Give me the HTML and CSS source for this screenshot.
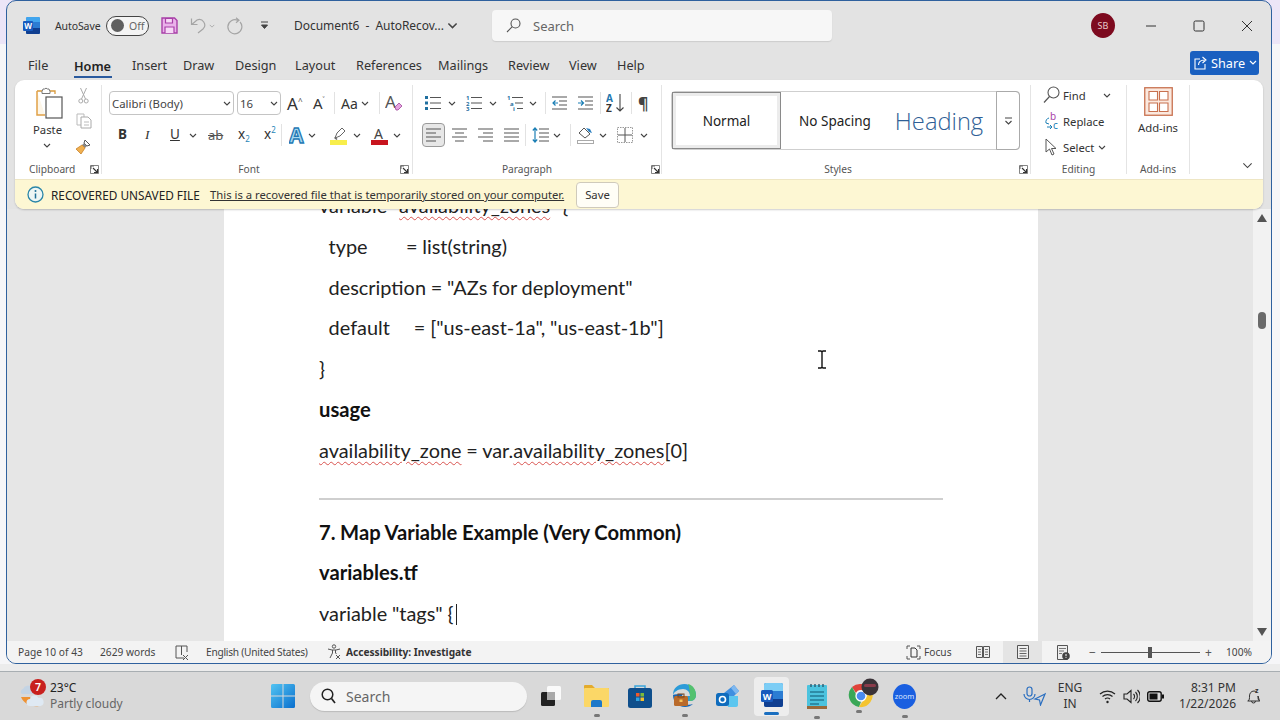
FILE: index.html
```html
<!DOCTYPE html>
<html lang="en">
<head>
<meta charset="utf-8">
<title>Document6 - Word</title>
<link rel="stylesheet" href="styles.css">
</head>
<body>
<svg class="sprite" aria-hidden="true">
  <symbol id="chev" viewBox="0 0 8 5"><path d="M1 1l3 3 3-3" fill="none" stroke="#444" stroke-width="1.1"/></symbol>
  <symbol id="launch" viewBox="0 0 9 9"><path d="M.5.5h8v8h-8z" fill="none" stroke="#666" stroke-width=".8"/><path d="M1 1h3M1 1v3" stroke="#666" fill="none"/><path d="M3 3l4.5 4.5M7.5 4v3.5H4" fill="none" stroke="#333" stroke-width="1.1"/></symbol>
</svg>
<div class="desktop">
  <main class="window">
    <header class="titlebar">
      <svg class="ic" width="17" height="17" viewBox="0 0 17 17"><rect x="3" width="14" height="17" rx="1.5" fill="#2b7cd3"/><path d="M3 1.5A1.5 1.5 0 014.5 0h11A1.5 1.5 0 0117 1.5V5H3z" fill="#41a5ee"/><path d="M3 11h14v4.5a1.500 1.500 0 01-1.500 1.500h-11A1.500 1.500 0 013 15.500z" fill="#103f91"/><rect y="4" width="10" height="10" rx="1" fill="#185abd"/><text x="5" y="12" class="svgw">W</text></svg>
      <span class="autosave">AutoSave</span>
      <span class="toggle"><i class="knob"></i><span>Off</span></span>
      <svg class="ic" width="17" height="17" viewBox="0 0 17 17"><path d="M1 1h12.500L16 3.500V16H1z" fill="#eab2ea" stroke="#a83fa8" stroke-width="1.400"/><path d="M4.500 1.500h7v4.500h-7zM4 16v-6h9v6" fill="#f6d8f6" stroke="#a83fa8" stroke-width="1.200"/></svg>
      <svg class="ic" width="16" height="17" viewBox="0 0 16 17"><path d="M1.500 1.500v6h6M1.800 7.500L7 3a5.500 5.500 0 016 9l-5 4" fill="none" stroke="#a5a5a5" stroke-width="1.200"/></svg>
      <svg class="ic" width="6" height="4"><use href="#chev" class="dim"/></svg>
      <svg class="ic" width="16" height="18" viewBox="0 0 16 18"><path d="M11 3.500A7 7 0 1013 5M9 .8l3 2.500-3 2.500" fill="none" stroke="#a5a5a5" stroke-width="1.200"/></svg>
      <svg class="ic" width="9" height="9" viewBox="0 0 9 9"><path d="M1 1h7M1.500 4l3 3.500 3-3.500z" fill="#444" stroke="#444"/></svg>
      <span class="doc-name">Document6&nbsp; -&nbsp; AutoRecov...</span>
      <svg class="ic" width="11" height="7"><use href="#chev"/></svg>
      <div class="search"><svg width="15" height="15" viewBox="0 0 15 15"><circle cx="9.500" cy="5.500" r="4.500" fill="none" stroke="#555" stroke-width="1.100"/><path d="M6.300 8.700L1 14" stroke="#555" stroke-width="1.100"/></svg><span>Search</span></div>
      <span class="avatar">SB</span>
      <svg class="ic" width="12" height="12" viewBox="0 0 12 12"><path d="M1 6h10" stroke="#333" stroke-width="1"/></svg>
      <svg class="ic" width="12" height="12" viewBox="0 0 12 12"><rect x="1" y="1" width="10" height="10" rx="1.500" fill="none" stroke="#333" stroke-width="1"/></svg>
      <svg class="ic" width="12" height="12" viewBox="0 0 12 12"><path d="M1 1l10 10M11 1L1 11" stroke="#333" stroke-width="1"/></svg>
    </header>

    <nav class="tabs">
      <span>File</span><span class="active">Home</span><span>Insert</span><span>Draw</span><span>Design</span><span>Layout</span><span>References</span><span>Mailings</span><span>Review</span><span>View</span><span>Help</span>
      <button class="share"><svg width="13" height="14" viewBox="0 0 13 14"><path d="M6 3H1v10h10V8M4.500 9c0-3 2-5 6-5M8.500 1l3.500 3-3.500 3" fill="none" stroke="#fff" stroke-width="1.100"/></svg><span>Share</span><svg width="8" height="5" viewBox="0 0 8 5"><path d="M1 1l3 3 3-3" fill="none" stroke="#fff" stroke-width="1.200"/></svg></button>
    </nav>

    <section class="card">
      <div class="ribbon">
        <div class="group g-clip">
          <div class="gbody clip-body">
            <div class="paste">
              <svg width="29" height="33" viewBox="0 0 29 33"><path d="M3 5h5M16 5h5v3" fill="none" stroke="#d99a3c" stroke-width="1.300"/><path d="M3 5v24h8" fill="#fdf6e8" stroke="#e0a046" stroke-width="1.500"/><path d="M8 5.500l1-2.500h1.500a2 2 0 013 0H15l1 2.500v2H8z" fill="#fff" stroke="#777"/><rect x="12" y="11" width="16" height="21" fill="#fff" stroke="#555" stroke-width="1.200"/></svg>
              <span class="t12">Paste</span>
              <svg class="ic" width="8" height="5"><use href="#chev"/></svg>
            </div>
            <div class="clip-tools">
              <svg width="11" height="17" viewBox="0 0 11 17"><path d="M2.500 1l5 11M8.500 1l-5 11" stroke="#aaa" fill="none"/><circle cx="2.800" cy="14" r="2" fill="none" stroke="#aaa"/><circle cx="8.200" cy="14" r="2" fill="none" stroke="#aaa"/></svg>
              <svg width="16" height="16" viewBox="0 0 16 16"><path d="M1 1h7v11H1z" fill="none" stroke="#bbb"/><path d="M5 4h7l3 3v8H5z" fill="#fff" stroke="#aaa"/><path d="M8 9h5M8 12h5" stroke="#bbb"/></svg>
              <svg width="17" height="17" viewBox="0 0 17 17"><path d="M10 2l5 5-3 1-3-3z" fill="#fff" stroke="#555"/><path d="M9 5l3 3-2 2-3-3z" fill="#888"/><path d="M7 7l3 3-4 6-5-5z" fill="#f0b050" stroke="#c8822a" stroke-width=".8"/></svg>
            </div>
          </div>
          <div class="glabel"><span>Clipboard</span><svg class="launch" width="9" height="9"><use href="#launch"/></svg></div>
        </div>

        <div class="group g-font">
          <div class="gbody stack">
            <div class="row r-font1">
              <div class="combo c-font"><span>Calibri (Body)</span><svg width="8" height="5"><use href="#chev"/></svg></div>
              <div class="combo c-size"><span>16</span><svg width="8" height="5"><use href="#chev"/></svg></div>
              <span class="gl big">A<sup>^</sup></span>
              <span class="gl med">A<sup>˅</sup></span>
              <i class="vdiv"></i>
              <span class="gl aa">Aa</span>
              <svg width="8" height="5"><use href="#chev"/></svg>
              <i class="vdiv"></i>
              <svg width="18" height="20" viewBox="0 0 18 20"><text x="0" y="15" class="svga">A</text><path d="M10 14l4-4 3 3-4 4h-2z" fill="#e6a3e0" stroke="#a0459a" stroke-width=".8"/></svg>
            </div>
            <div class="row r-font2">
              <b class="gl fmt">B</b>
              <i class="gl fmt ital">I</i>
              <u class="gl fmt">U</u>
              <svg width="8" height="5"><use href="#chev"/></svg>
              <s class="gl ab">ab</s>
              <span class="gl fmt sc">x<sub>2</sub></span>
              <span class="gl fmt sc">x<sup>2</sup></span>
              <i class="vdiv"></i>
              <svg width="16" height="19" viewBox="0 0 16 19"><text x="0" y="17" class="svgfx">A</text></svg>
              <svg width="8" height="5"><use href="#chev"/></svg>
              <svg width="17" height="19" viewBox="0 0 17 19"><path d="M5 12l2-5 5-5 3 3-5 5z" fill="#fff" stroke="#666"/><path d="M4 12l1.500-1 2 2-1 1z" fill="#666"/><rect y="14" width="17" height="5" fill="#f8ee4b"/></svg>
              <svg width="8" height="5"><use href="#chev"/></svg>
              <svg width="17" height="19" viewBox="0 0 17 19"><text x="3" y="12.500" class="svgc">A</text><rect y="14" width="17" height="5" fill="#c8141e"/></svg>
              <svg width="8" height="5"><use href="#chev"/></svg>
            </div>
          </div>
          <div class="glabel center"><span>Font</span><svg class="launch" width="9" height="9"><use href="#launch"/></svg></div>
        </div>

        <div class="group g-para">
          <div class="gbody stack">
            <div class="row r-para1">
              <svg width="16" height="16" viewBox="0 0 16 16"><path d="M0 1h3v3H0zM0 6.500h3v3H0zM0 12h3v3H0z" fill="#1f6f9f"/><path d="M5 2.500h11M5 8h11M5 13.500h11" stroke="#555" stroke-width="1.200"/></svg>
              <svg width="8" height="5"><use href="#chev"/></svg>
              <svg width="16" height="16" viewBox="0 0 16 16"><text x="0" y="5" class="svgn">1</text><text x="0" y="10.500" class="svgn">2</text><text x="0" y="16" class="svgn">3</text><path d="M5 2.500h11M5 8h11M5 13.500h11" stroke="#555" stroke-width="1.200"/></svg>
              <svg width="8" height="5"><use href="#chev"/></svg>
              <svg width="16" height="16" viewBox="0 0 16 16"><text x="0" y="5" class="svgn">1</text><text x="3" y="10.500" class="svgn">a</text><text x="6" y="16" class="svgn">i</text><path d="M5 2.500h11M8 8h8M10 13.500h6" stroke="#555" stroke-width="1.200"/></svg>
              <svg width="8" height="5"><use href="#chev"/></svg>
              <i class="vdiv"></i>
              <svg width="15" height="14" viewBox="0 0 15 14"><path d="M0 1h15M7 5h8M7 9h8M0 13h15" stroke="#555" stroke-width="1.100"/><path d="M1 7h5M3.500 4.500L1 7l2.500 2.500" fill="none" stroke="#1b7fb5" stroke-width="1.200"/></svg>
              <svg width="15" height="14" viewBox="0 0 15 14"><path d="M0 1h15M7 5h8M7 9h8M0 13h15" stroke="#555" stroke-width="1.100"/><path d="M0 7h5M3 4.500L5.500 7 3 9.500" fill="none" stroke="#1b7fb5" stroke-width="1.200"/></svg>
              <i class="vdiv"></i>
              <svg width="18" height="20" viewBox="0 0 18 20"><text x="0" y="9" class="svgaz blue">A</text><text x="0" y="19" class="svgaz">Z</text><path d="M14 1v17M10.500 14.500L14 18l3.500-3.500" fill="none" stroke="#444" stroke-width="1.100"/></svg>
              <i class="vdiv"></i>
              <span class="pilcrow">¶</span>
            </div>
            <div class="row r-para2">
              <span class="al-on"><svg width="15" height="14" viewBox="0 0 15 14"><path d="M0 1h15M0 5h10M0 9h15M0 13h10" stroke="#555" stroke-width="1.200"/></svg></span>
              <svg width="15" height="14" viewBox="0 0 15 14"><path d="M0 1h15M3 5h9M0 9h15M3 13h9" stroke="#555" stroke-width="1.200"/></svg>
              <svg width="15" height="14" viewBox="0 0 15 14"><path d="M0 1h15M5 5h10M0 9h15M5 13h10" stroke="#555" stroke-width="1.200"/></svg>
              <svg width="15" height="14" viewBox="0 0 15 14"><path d="M0 1h15M0 5h15M0 9h15M0 13h15" stroke="#555" stroke-width="1.200"/></svg>
              <i class="vdiv"></i>
              <svg width="17" height="16" viewBox="0 0 17 16"><path d="M7 2h10M7 6h10M7 10h10M7 14h10" stroke="#555" stroke-width="1.200"/><path d="M3 1v14M.8 3.500L3 1l2.200 2.500M.8 12.500L3 15l2.200-2.500" fill="none" stroke="#1b7fb5" stroke-width="1.200"/></svg>
              <svg width="8" height="5"><use href="#chev"/></svg>
              <i class="vdiv"></i>
              <svg width="17" height="18" viewBox="0 0 17 18"><path d="M2 7l5-5 6 6-5 4z" fill="#fff" stroke="#555"/><path d="M9 2l3 4 3 1-2-4z" fill="#2a7fc0"/><rect x=".5" y="14.500" width="16" height="3" fill="#fff" stroke="#aaa"/></svg>
              <svg width="8" height="5"><use href="#chev"/></svg>
              <svg width="16" height="16" viewBox="0 0 16 16"><path d="M8 1v14M1 8h14" stroke="#555"/><path d="M.5.500h15v15H.500z" fill="none" stroke="#999" stroke-dasharray="1.500 1"/></svg>
              <svg width="8" height="5"><use href="#chev"/></svg>
            </div>
          </div>
          <div class="glabel center"><span>Paragraph</span><svg class="launch" width="9" height="9"><use href="#launch"/></svg></div>
        </div>

        <div class="group g-styles">
          <div class="gbody">
            <div class="gallery">
              <div class="st-normal"><span>Normal</span></div>
              <div class="st-nospace">No Spacing</div>
              <div class="st-heading">Heading</div>
              <div class="st-more"><svg width="9" height="8" viewBox="0 0 9 8"><path d="M1 1h7" stroke="#444"/><path d="M1.500 4l3 3 3-3" fill="none" stroke="#444" stroke-width="1.100"/></svg></div>
            </div>
          </div>
          <div class="glabel center"><span>Styles</span><svg class="launch" width="9" height="9"><use href="#launch"/></svg></div>
        </div>

        <div class="group g-edit">
          <div class="gbody edit-list">
            <div class="edit-row"><svg width="17" height="18" viewBox="0 0 17 18"><circle cx="10.500" cy="6.500" r="5.500" fill="none" stroke="#555" stroke-width="1.100"/><path d="M6.500 10.500L1 16.500" stroke="#555" stroke-width="1.200"/></svg><span class="t12 w-find">Find</span><svg width="8" height="5"><use href="#chev"/></svg></div>
            <div class="edit-row"><svg width="17" height="18" viewBox="0 0 17 18"><text x="7" y="8" class="svgb">b</text><text x="10" y="17" class="svgcc">c</text><path d="M6 6a4 4 0 00-3 5l3 1M4 15h5M7 13l2 2-2 2" fill="none" stroke="#1b7fb5" stroke-width="1"/></svg><span class="t12">Replace</span></div>
            <div class="edit-row"><svg width="17" height="18" viewBox="0 0 17 18"><path d="M3 1v13l3.500-3 2.500 6 2-1-2.500-5.500H13z" fill="#fff" stroke="#555"/></svg><span class="t12 w-sel">Select</span><svg width="8" height="5"><use href="#chev"/></svg></div>
          </div>
          <div class="glabel center"><span>Editing</span></div>
        </div>

        <div class="group g-addin">
          <div class="gbody addin-body">
            <svg width="29" height="29" viewBox="0 0 29 29"><rect x=".75" y=".75" width="27.500" height="27.500" fill="#fbe9df" stroke="#c8714f" stroke-width="1.300"/><path d="M5 4.500h8.500V13H5zM15.500 4.500H24V13h-8.500zM5 16h8.500v8.500H5zM15.500 16H24v8.500h-8.500z" fill="#fff" stroke="#c8714f" stroke-width="1.100"/></svg>
            <span class="t12">Add-ins</span>
          </div>
          <div class="glabel center"><span>Add-ins</span></div>
        </div>

        <div class="collapse"><svg width="11" height="7" viewBox="0 0 8 5"><path d="M1 1l3 3 3-3" fill="none" stroke="#444" stroke-width=".8"/></svg></div>
      </div>

      <div class="notice">
        <svg width="17" height="17" viewBox="0 0 17 17"><circle cx="8.500" cy="8.500" r="7.500" fill="#eef6f4" stroke="#2a86a8" stroke-width="1.300"/><path d="M8.500 7.500v5" stroke="#1f6f96" stroke-width="1.500"/><circle cx="8.500" cy="5" r="1" fill="#1f6f96"/></svg>
        <span class="n-title">RECOVERED UNSAVED FILE</span>
        <a class="n-link">This is a recovered file that is temporarily stored on your computer.</a>
        <button class="n-save">Save</button>
      </div>
    </section>

    <section class="doc">
      <div class="scrollpane">
        <article class="page">
          <p>variable "<span class="sq">availability_zones</span>" {</p>
          <p>  type        = list(string)</p>
          <p>  description = "AZs for deployment"</p>
          <p>  default     = ["us-east-1a", "us-east-1b"]</p>
          <p>}</p>
          <p class="bold">usage</p>
          <p><span class="sq">availability_zone</span> = var.<span class="sq">availability_zones</span>[0]</p>
          <hr class="rule">
          <p class="bold">7. Map Variable Example (Very Common)</p>
          <p class="bold">variables.tf</p>
          <p>variable "tags" {<i class="caret"></i></p>
        </article>
      </div>
      <div class="vscroll">
        <svg width="10" height="8" viewBox="0 0 10 8"><path d="M5 0l5 8H0z" fill="#555"/></svg>
        <i class="thumb"></i>
        <svg width="10" height="8" viewBox="0 0 10 8"><path d="M5 8L0 0h10z" fill="#555"/></svg>
      </div>
      <svg class="ibeam" width="10" height="19" viewBox="0 0 10 19"><path d="M1 1h3l1 1 1-1h3M1 18h3l1-1 1 1h3M5 2v15" fill="none" stroke="#111" stroke-width="1.400"/></svg>
    </section>

    <footer class="status">
      <span class="s-page">Page 10 of 43</span>
      <span class="s-words">2629 words</span>
      <svg class="s-proof" width="15" height="15" viewBox="0 0 15 15"><path d="M9 13H1V1h11v6" fill="none" stroke="#555"/><path d="M6.500 1v9M8 10l5 5M13 10l-5 5" stroke="#555" fill="none"/></svg>
      <span class="s-lang">English (United States)</span>
      <svg class="s-a11y" width="15" height="16" viewBox="0 0 15 16"><circle cx="7" cy="2.500" r="1.700" fill="none" stroke="#555"/><path d="M1 5l4 1h4l4-1M5.500 6v3L3 14M8.500 6v3l1 1M9 11l4 4M13 11l-4 4" fill="none" stroke="#555"/></svg>
      <b class="s-ally-t">Accessibility: Investigate</b>
      <div class="s-right">
        <svg width="15" height="15" viewBox="0 0 15 15"><path d="M1 4V1h3M11 1h3v3M14 11v3h-3M4 14H1v-3" fill="none" stroke="#555"/><path d="M5 3h4l2 2v7H5z" fill="none" stroke="#333"/></svg>
        <span class="s-focus">Focus</span>
        <svg class="s-read" width="14" height="14" viewBox="0 0 14 14"><path d="M.5 1.500h6v11h-6zM7.500 1.500h6v11h-6z" fill="#eee" stroke="#555"/><path d="M2 4.500h3M2 7h3M2 9.500h3M9 4.500h3M9 7h3M9 9.500h3" stroke="#777"/></svg>
        <span class="s-print"><svg width="12" height="14" viewBox="0 0 12 14"><path d="M.5.500h11v13H.500z" fill="#eee" stroke="#555"/><path d="M2.500 3.500h7M2.500 6h7M2.500 8.500h7M2.500 11h7" stroke="#666"/></svg></span>
        <svg class="s-web" width="14" height="15" viewBox="0 0 14 15"><path d="M1.500.500h10v14h-10z" fill="#eee" stroke="#555"/><path d="M3 3.500h7M3 6h5M3 8.500h3" stroke="#777"/><circle cx="10" cy="11" r="3.800" fill="#444"/><path d="M10 9v2.200M10 12.200v.800" stroke="#fff"/></svg>
        <span class="zoomctl">
          <i class="zm">−</i>
          <span class="slider"><i class="slider-thumb"></i></span>
          <i class="zm">+</i>
        </span>
        <span class="s-pct">100%</span>
      </div>
    </footer>
  </main>
  <div class="strip"></div>
  <footer class="taskbar">
    <div class="weather">
      <span class="wx-ic">
        <svg width="26" height="24" viewBox="0 0 26 24"><path d="M1 9a3 3 0 012-4 5 5 0 019-1 3 3 0 012 6H2z" fill="#c4d4e4"/><path d="M1 13c3 7 10 10 18 9l-6-4-3-5z" fill="#ee9233"/><path d="M10 22a3.500 3.500 0 010-7 4.500 4.500 0 018.500-1 3.500 3.500 0 012 8z" fill="#dfe9f3"/></svg>
        <span class="badge">7</span>
      </span>
      <div class="wx-text"><span class="wx-t">23°C</span><span class="wx-s">Partly cloudy</span></div>
    </div>
    <svg class="win" width="24" height="24" viewBox="0 0 24 24"><defs><linearGradient id="wg" x1="0" y1="0" x2="1" y2="1"><stop offset="0" stop-color="#52c4f2"/><stop offset="1" stop-color="#0a6fce"/></linearGradient></defs><path d="M0 1.500A1.500 1.500 0 011.500 0h10v11.500H0zM12.500 0h10A1.500 1.500 0 0124 1.500v10H12.500zM0 12.500h11.500V24h-10A1.500 1.500 0 010 22.500zM12.500 12.500H24v10a1.500 1.500 0 01-1.500 1.500h-10z" fill="url(#wg)"/></svg>
    <div class="tb-search"><svg width="15" height="16" viewBox="0 0 15 16"><circle cx="6.500" cy="6.500" r="5.300" fill="none" stroke="#222" stroke-width="1.500"/><path d="M10.500 10.500L14 15" stroke="#222" stroke-width="1.700"/></svg><span>Search</span></div>
    <div class="tb-icons">
      <span class="app a-task"><svg width="22" height="22" viewBox="0 0 22 22"><rect x="1" y="7" width="14" height="14" rx="1.500" fill="#222"/><rect x="7" y="1" width="14" height="14" rx="1.500" fill="#fafafa"/><rect x="7" y="7" width="8" height="8" fill="#aaa"/></svg></span>
      <span class="app a-folder run"><svg width="25" height="25" viewBox="0 0 25 25"><path d="M0 3a1 1 0 011-1h7l3 3h13a1 1 0 011 1v3H0z" fill="#e3ab2d"/><rect y="5" width="25" height="19" rx="1" fill="#fbd767"/><path d="M7 19a2 2 0 012-2h7a2 2 0 012 2v5H7z" fill="#1d78c9"/></svg></span>
      <span class="app a-store"><svg width="24" height="24" viewBox="0 0 24 24"><path d="M7 5V2h10v3" fill="none" stroke="#3aa5dc" stroke-width="1.500"/><rect y="4" width="24" height="20" rx="2.500" fill="#0f4f8c"/><path d="M8 9h3.500v3.500H8z" fill="#ef5a2a"/><path d="M12.500 9H16v3.500h-3.500z" fill="#7cba3a"/><path d="M8 13.500h3.500V17H8z" fill="#2fa3e0"/><path d="M12.500 13.500H16V17h-3.500z" fill="#f5c02c"/></svg></span>
      <span class="app a-edge run"><svg width="25" height="25" viewBox="0 0 25 25"><path d="M1 12C1 5 6 1 12.500 1S24 6 24 12c0 4-3 6-6 6H11c0-3 2-5 7-5 0-4-3-7-7-7-5 0-9 3-10 6z" fill="#2c9bd8"/><path d="M16 1c5 1 8 6 8 11 0 3-2 6-6 6-1-3 0-4 0-5 0-5-1-10-2-12z" fill="#54c16f"/><path d="M1 12c0 7 5 12 12 12 3 0 6-1 8-3-5 2-10 0-11-4-1-3 0-5 1-6-5 0-8 0-10 1z" fill="#1566b7"/><rect x="2" y="13" width="14" height="10" rx="1.500" fill="#b96a2a"/><rect x="6" y="11" width="6" height="3" fill="none" stroke="#7a4520"/><rect x="7.500" y="16.500" width="3" height="2.500" fill="#f5c35c"/></svg></span>
      <span class="app a-outlook"><svg width="24" height="24" viewBox="0 0 24 24"><path d="M8 9l10-8 5 6-9 9z" fill="#3f8fe0"/><path d="M15 4l3-3 5 6-3 3z" fill="#7fb8ef"/><path d="M10 12h12v9a2 2 0 01-2 2h-8z" fill="#5cc6ef"/><rect y="9" width="13" height="13" rx="2.500" fill="#0f6cbd"/><circle cx="6.500" cy="15.500" r="3" fill="none" stroke="#fff" stroke-width="1.600"/></svg></span>
      <span class="app a-word"><svg width="22" height="25" viewBox="0 0 22 25"><rect x="3" width="19" height="24" rx="2" fill="#2b7cd3"/><path d="M3 2a2 2 0 012-2h15a2 2 0 012 2v6H3z" fill="#7ccdf5"/><path d="M3 8h19v8H3z" fill="#2b7cd3"/><path d="M3 16h19v6a2 2 0 01-2 2H5a2 2 0 01-2-2z" fill="#103f91"/><rect y="7" width="12" height="12" rx="1.500" fill="#185abd"/><text x="6" y="16.500" class="svgw2">W</text></svg><i class="active-bar"></i></span>
      <span class="app a-notes run"><svg width="20" height="27" viewBox="0 0 20 27"><rect y="2" width="20" height="24" rx="1" fill="#4cc3de"/><rect y="23" width="20" height="3" fill="#9a6a3c"/><path d="M4 1v3M8 1v3M12 1v3M16 1v3" stroke="#2a5a70" stroke-width="1.400"/><path d="M3 9h14M3 13h14M3 17h14M3 21h9" stroke="#11566e" stroke-width="1.200"/></svg></span>
      <span class="app a-chrome run"><svg width="31" height="31" viewBox="0 0 31 31"><path d="M13 6a12 12 0 0110.500 6H13a5 5 0 00-5 3L4 9a12 12 0 019-3z" fill="#e0433a"/><path d="M4 9l5 9a5 5 0 005 3l-3 8A12 12 0 014 9z" fill="#3aa757"/><path d="M23.500 12A12 12 0 0111 29l5-8a5 5 0 001-9z" fill="#f4c430"/><circle cx="13" cy="18" r="5" fill="#4a8bf0" stroke="#fff" stroke-width="1.300"/><circle cx="22" cy="9" r="8.500" fill="#3a3338"/><rect x="16" y="6" width="12" height="3" rx="1.500" fill="#8a3b4a"/></svg></span>
      <span class="app a-zoom run"><span class="zoom-logo">zoom</span></span>
    </div>
    <div class="tray">
      <svg class="t-chev" width="12" height="7" viewBox="0 0 12 7"><path d="M1 6l5-5 5 5" fill="none" stroke="#222" stroke-width="1.300"/></svg>
      <svg class="t-mic" width="23" height="20" viewBox="0 0 23 20"><rect x="4" y="1" width="5" height="9" rx="2.500" fill="none" stroke="#2b6fc0" stroke-width="1.200"/><path d="M1 8a5.500 5.500 0 0011 0M6.500 13.500V16" fill="none" stroke="#2b6fc0" stroke-width="1.200"/><path d="M22 8l-10 5 4.500 1 1 5z" fill="none" stroke="#2b6fc0" stroke-width="1.200"/></svg>
      <div class="t-lang"><span>ENG</span><span>IN</span></div>
      <svg class="t-wifi" width="17" height="15" viewBox="0 0 17 15"><path d="M1 5a11 11 0 0115 0M3.500 7.500a7.500 7.500 0 0110 0M6 10a4 4 0 015 0" fill="none" stroke="#222" stroke-width="1.200"/><circle cx="8.500" cy="13" r="1.200" fill="#222"/></svg>
      <svg class="t-vol" width="17" height="15" viewBox="0 0 17 15"><path d="M1 5h3l4-3.500v12L4 10H1z" fill="none" stroke="#222" stroke-width="1.100"/><path d="M10.500 5a3.500 3.500 0 010 5M12.500 3a6.500 6.500 0 010 9M14.500 1a9 9 0 010 13" fill="none" stroke="#222" stroke-width="1.100"/></svg>
      <svg class="t-bat" width="17" height="11" viewBox="0 0 17 11"><rect x=".7" y=".7" width="13.500" height="9.600" rx="2" fill="none" stroke="#111" stroke-width="1.400"/><rect x="2.500" y="2.500" width="8" height="6" fill="#111"/><rect x="15" y="3.500" width="2" height="4" fill="#111"/></svg>
      <div class="t-clock"><span>8:31 PM</span><span>1/22/2026</span></div>
      <svg class="t-bell" width="13" height="18" viewBox="0 0 13 18"><path d="M1 14c1.500-1 1.500-2.500 1.500-5S4 4 7 4c1 0 2 .500 2.500 1M11 9c0 2.500 0 4 1.500 5zM.5 14h12M4.500 14a2 2 0 004 0" fill="none" stroke="#333"/><text x="8" y="6" class="svgz">z</text></svg>
    </div>
  </footer>
</div>
</body>
</html>
```
FILE: styles.css
```css
* { box-sizing: border-box; }
html, body { margin: 0; padding: 0; }
body {
  width: 1280px; height: 720px; overflow: hidden;
  font-family: "Noto Sans", "Open Sans", sans-serif;
  color: #333;
  background: linear-gradient(#ece5f7 0 44px, #f6f6f8 44px);
}
.sprite { position: absolute; width: 0; height: 0; }
svg { display: block; flex: none; }
.desktop { height: 720px; display: flex; flex-direction: column; }

.window {
  margin: 0 8px 0 6px; height: 664px;
  border: 1px solid #2f619e;
  border-radius: 10px;
  background: #e3e3e3;
  display: flex; flex-direction: column;
  overflow: hidden; flex: none;
}
.t12 { font-size: 11.300px; }
.ic { align-self: center; }

/* title bar */
.titlebar {
  height: 49px; flex: none; padding-left: 16px;
  display: grid; align-items: center;
  grid-template-columns: 32px 51px 55px 29px 19px 18px 33px 34px 153px 45px 599px 54px 48px 48px 12px;
}
.autosave { font-size: 10.500px; letter-spacing: -.1px; white-space: nowrap; }
.doc-name { white-space: pre; font-size: 12px; letter-spacing: -.05px; }
.toggle {
  width: 43px; height: 20px; border: 1px solid #444; border-radius: 10px;
  display: flex; align-items: center; gap: 5px; padding-left: 4px;
  font-size: 10.500px; color: #666; background: #f4f4f4;
}
.knob { width: 13px; height: 13px; border-radius: 50%; background: #5f5f5f; }
.search {
  width: 340px; height: 31px; background: #f7f7f7; border-radius: 4px;
  display: flex; align-items: center; gap: 12px; padding-left: 14px;
  font-size: 13px; color: #666; box-shadow: 0 1px 1px #ccc;
}
.avatar {
  width: 24px; height: 25px; border-radius: 50%; background: #7d0a1f; color: #e8c8c8;
  font-size: 9px; display: flex; align-items: center; justify-content: center;
}
.dim { opacity: .4; }

/* tabs */
.tabs {
  height: 30px; flex: none; padding-left: 21px; font-size: 12.700px;
  display: grid; align-items: center; position: relative;
  grid-template-columns: 46px 58px 51px 52px 60px 61px 82px 70px 61px 48px 573px 69px;
}
.tabs .active {
  font-weight: 600; color: #222; height: 24px; width: 38px; line-height: 24px;
  border-bottom: 2px solid #2a5a9e; margin-top: 1px;
}
.share {
  height: 24px; width: 69px; margin: -5px 0 0; border: 0; border-radius: 3px;
  background: #1a60c0; color: #fff; font: inherit; padding: 0 0 0 4px;
  display: flex; align-items: center; gap: 4px;
}

/* ribbon card */
.card {
  margin: 0 8px; flex: none; height: 129px; position: relative; z-index: 2;
  border-radius: 9px; background: #fff; overflow: hidden;
  box-shadow: 0 1px 2px rgba(0,0,0,.2); display: flex; flex-direction: column;
}
.ribbon { height: 99px; flex: none; display: flex; padding-top: 5px; font-size: 11.300px; }
.group {
  flex: none; height: 89px; border-right: 1px solid #e4e4e4;
  display: flex; flex-direction: column;
}
.gbody { height: 73px; flex: none; }
.glabel {
  height: 16px; padding-top: 6px; position: relative; font-size: 10.200px; color: #555;
  display: flex; align-items: center;
}
.glabel.center { justify-content: center; }
.launch { position: absolute; right: 2px; top: 7px; }
.vdiv { width: 1px; height: 22px; background: #e2e2e2; display: block; }
.gl { font-style: normal; color: #333; }
.row { display: grid; align-items: center; }
.stack { display: flex; flex-direction: column; }

.g-clip { width: 87px; }
.clip-body { display: flex; }
.paste { width: 59px; padding: 1px 0 0 19px; display: flex; flex-direction: column; align-items: flex-start; }
.paste .t12 { margin: 3px 0 6px -1px; }
.paste .ic { margin-left: 9px; align-self: flex-start; }
.clip-tools { display: flex; flex-direction: column; gap: 9px; padding: 2px 0 0 1px; align-items: center; width: 18px; }
.g-clip .glabel { padding-left: 14px; }

.g-font { width: 311px; }
.g-font .glabel { padding-right: 16px; }
.g-font .launch { right: 3px; }
.r-font1 {
  height: 30px; margin-top: 3px; padding-left: 7px;
  grid-template-columns: 128px 50px 26px 21px 7px 20px 18px 6px 18px;
  justify-items: start;
}
.combo {
  height: 24px; border: 1px solid #c4c4c4; border-radius: 4px;
  display: flex; align-items: center; justify-content: space-between;
  padding: 0 2px 0 2px; font-size: 11.400px; color: #444;
}
.c-font { width: 125px; }
.c-size { width: 44px; padding-left: 2px; }
.big { font-size: 17px; line-height: 1; }
.med { font-size: 15px; line-height: 1; }
.gl sup { font-size: 8px; vertical-align: 6px; line-height: 0; color: #444; }
.gl sub { font-size: 8px; vertical-align: -3px; color: #2a86b8; line-height: 0; }
.sc sup { color: #2a86b8; }
.aa { font-size: 14px; }
.r-font2 {
  height: 30px; margin-top: 2px; padding-left: 16px;
  grid-template-columns: 27px 25px 19px 19px 30px 26px 17px 8px 19px 22px 23px 18px 22px 8px;
  justify-items: start;
}
.fmt { font-size: 13.500px; line-height: 1; }
.ital { font-family: "Liberation Serif", serif; font-style: italic; }
.ab { font-size: 13px; color: #555; }
.svgw { font: bold 8px "Noto Sans", sans-serif; fill: #fff; text-anchor: middle; }
.svgw2 { font: bold 9px "Noto Sans", sans-serif; fill: #fff; text-anchor: middle; }
.svga { font: 17px "Noto Sans", sans-serif; fill: #555; }
.svgfx { font: bold 21px "Noto Sans", sans-serif; fill: #a9d8f0; stroke: #1e78b4; stroke-width: 1.300; }
.svgc { font: 14px "Noto Sans", sans-serif; fill: #444; }
.svgn { font: bold 6px "Noto Sans", sans-serif; fill: #1f6f9f; }
.svgaz { font: bold 10px "Noto Sans", sans-serif; fill: #333; }
.svgaz.blue { fill: #1f78b0; }
.svgb { font: 10px "Noto Sans", sans-serif; fill: #a83fa8; }
.svgcc { font: 10px "Noto Sans", sans-serif; fill: #1b7fb5; }
.svgz { font: bold 7px "Noto Sans", sans-serif; fill: #333; }

.g-para { width: 249px; }
.g-para .glabel { padding-right: 20px; }
.g-para .launch { right: 1px; }
.r-para1 {
  height: 30px; margin-top: 3px; padding-left: 12px;
  grid-template-columns: 23px 18px 23px 18px 22px 16px 7px 26px 22px 6px 25px 7px 11px;
  justify-items: start;
}
.pilcrow { font: bold 16px "Noto Sans", sans-serif; color: #444; }
.r-para2 {
  height: 30px; margin-top: 2px; padding-left: 9px;
  grid-template-columns: 30px 26px 26px 21px 7px 21px 17px 7px 22px 18px 23px 8px;
  justify-items: start;
}
.al-on {
  width: 23px; height: 24px; background: #e7e7e7; border: 1px solid #9a9a9a; border-radius: 4px;
  display: flex; align-items: center; justify-content: center;
}

.g-styles { width: 369px; }
.g-styles .glabel { padding-right: 16px; }
.gallery {
  margin: 6px 0 0 9px; width: 349px; height: 59px;
  border: 1px solid #cfcfcf; border-radius: 4px;
  display: grid; align-items: center; grid-template-columns: 109px 108px 107px 1fr;
}
.st-normal {
  height: 57px; border: 1px solid #8a8a8a; padding: 3px; background: #ececec;
  display: flex;
}
.st-normal span {
  flex: 1; background: #fff; display: flex; align-items: center; justify-content: center;
  font-size: 13.500px; color: #222;
}
.st-nospace { font-size: 13.500px; color: #222; text-align: center; }
.st-heading { font: 300 23.700px "Open Sans", sans-serif; color: #2f5f96; text-align: center; padding-right: 7px; }
.st-more {
  height: 59px; margin: -1px -1px -1px 0; border: 1px solid #aaa; border-radius: 0 4px 4px 0;
  display: flex; align-items: center; justify-content: center;
}

.g-edit { width: 96px; }
.edit-list { padding: 0 0 0 12px; margin: -3px 0 3px; display: flex; flex-direction: column; }
.edit-row { height: 26px; flex: none; display: flex; align-items: center; gap: 3px; }
.w-find { width: 37px; }
.w-sel { width: 32px; }

.g-addin { width: 63px; }
.addin-body { padding-top: 2px; display: flex; flex-direction: column; align-items: center; gap: 4px; }
.collapse { flex: 1; display: flex; align-items: flex-end; justify-content: flex-end; padding: 0 10px 10px 0; }

/* notice */
.notice {
  height: 30px; flex: none; background: #fdf7d3; border-top: 1px solid #eee6c4;
  display: flex; align-items: center; padding-left: 12px; color: #222;
}
.n-title { margin-left: 7px; width: 159px; white-space: nowrap; font-size: 11.800px; }
.n-link { text-decoration: underline; white-space: nowrap; width: 366px; color: #333; font-size: 11.300px; }
.n-save {
  width: 43px; height: 26px; background: #fffef6; border: 1px solid #cfcabb; border-radius: 4px;
  font: 11.300px "Noto Sans", sans-serif; color: #333; padding: 0;
}

/* document */
.doc { flex: 1; min-height: 0; display: flex; position: relative; background: #e6e6e6; }
.scrollpane { flex: 1; overflow: hidden; padding-left: 217px; }
.page {
  width: 814px; height: 480px; margin-top: -24px; padding: 0 95px;
  background: #fff; font-family: "Lato", sans-serif; font-size: 19.900px; word-spacing: -.3px; color: #222;
}
.page p { margin: 0; height: 40.800px; line-height: 40.800px; white-space: pre; }
.page .bold { font-weight: 700; font-size: 20.200px; color: #111; }
.sq { text-decoration: underline wavy #d9534f 1px; text-underline-offset: 3px; }
.rule { margin: 27px 0 12px; height: 2px; border: 0; background: #cfcfcf; }
.caret { display: inline-block; width: 1px; height: 21px; margin-left: 3px; background: #222; vertical-align: -4px; }
.vscroll {
  width: 18px; background: #f2f2f2; display: flex; flex-direction: column; align-items: center;
  padding: 5px 0 5px; position: relative;
}
.thumb { width: 8px; height: 17px; border-radius: 4px; background: #6a6a6a; margin: 90px 0 auto; }
.ibeam { position: absolute; left: 810px; top: 141px; }

/* status bar */
.status {
  height: 22px; flex: none; background: #f3f3f3; font-size: 10.200px; color: #444;
  display: flex; align-items: center; padding-left: 11px; white-space: nowrap;
}
.s-page { width: 82px; }
.s-words { width: 75px; }
.s-proof { margin-right: 16px; }
.s-lang { width: 121px; letter-spacing: -.25px; }
.s-a11y { margin-right: 4px; }
.s-ally-t { font-weight: 700; color: #333; width: 560px; letter-spacing: -.03px; }
.s-right { display: flex; align-items: center; height: 100%; }
.s-focus { margin-left: 3px; width: 52px; }
.s-read { margin-right: 13px; }
.s-print {
  width: 39px; height: 100%; background: #e4e4e4; display: flex; align-items: center; justify-content: center;
}
.s-web { margin-left: 14px; margin-right: 19px; }
.zoomctl { display: flex; align-items: center; gap: 5px; }
.zm { font-style: normal; font-size: 12px; color: #555; width: 7px; text-align: center; }
.slider { width: 99px; height: 1px; background: #555; position: relative; display: block; }
.slider-thumb { position: absolute; left: 47px; top: -5px; width: 4px; height: 11px; background: #555; }
.s-pct { margin-left: 14px; }

/* taskbar */
.strip { height: 8px; flex: none; background: #ececec; border-bottom: 1px solid #a8aeb2; }
.taskbar {
  height: 48px; flex: none; background: #d9d9d9; display: flex; align-items: center;
  position: relative; padding-left: 20px;
}
.weather { width: 251px; display: flex; align-items: center; gap: 4px; }
.wx-ic { position: relative; display: block; width: 26px; }
.badge {
  position: absolute; left: 10px; top: -5px; width: 16px; height: 16px; border-radius: 50%;
  background: #c8201e; color: #fff; font-size: 10.500px; font-weight: 600;
  display: flex; align-items: center; justify-content: center;
}
.wx-text { display: flex; flex-direction: column; font-size: 12px; line-height: 16px; }
.wx-t { color: #222; }
.wx-s { color: #666; }
.tb-search {
  margin-left: 15px; width: 217px; height: 29px; border-radius: 15px; background: #f5f5f5;
  display: flex; align-items: center; gap: 10px; padding-left: 11px; font-size: 14px; color: #666;
  box-shadow: 0 1px 1px #bbb;
}
.tb-icons {
  margin-left: 13px; width: 391px; display: grid; align-items: center; justify-items: start;
  grid-template-columns: 44px 44px 44px 44px 38px 53px 41px 45px 23px;
}
.app { position: relative; display: block; }
.app.run::after {
  content: ""; position: absolute; left: 50%; margin-left: -3px; bottom: -9px; width: 6px; height: 3px;
  border-radius: 2px; background: #777;
}
.a-task { margin-top: -1px; }
.a-folder, .a-edge { margin-top: -1px; }
.a-word {
  width: 35px; height: 39px; background: #ededed; border-radius: 4px; padding: 6px 0 0 7px;
}
.active-bar { position: absolute; left: 10px; bottom: 1px; width: 15px; height: 3px; border-radius: 2px; background: #1a6fc0; }
.a-chrome { margin-top: -6px; }
.a-chrome.run::after { bottom: -4px; margin-left: -8px; }
.zoom-logo {
  width: 23px; height: 25px; border-radius: 50%; background: #1a5fe0; color: #dbe6ff; font-size: 7.500px;
  display: flex; align-items: center; justify-content: center;
}
.tray { display: flex; align-items: center; }
.t-chev { margin-left: 64px; }
.t-mic { margin-left: 16px; }
.t-lang { margin-left: 4px; width: 40px; display: flex; flex-direction: column; align-items: center; font-size: 12px; line-height: 16px; color: #333; }
.t-wifi { margin-left: 9px; }
.t-vol { margin-left: 7px; }
.t-bat { margin-left: 7px; }
.t-clock { margin-left: 18px; width: 54px; display: flex; flex-direction: column; align-items: flex-end; font-size: 12px; line-height: 16px; color: #333; white-space: nowrap; }
.t-bell { margin-left: 11px; }
```
